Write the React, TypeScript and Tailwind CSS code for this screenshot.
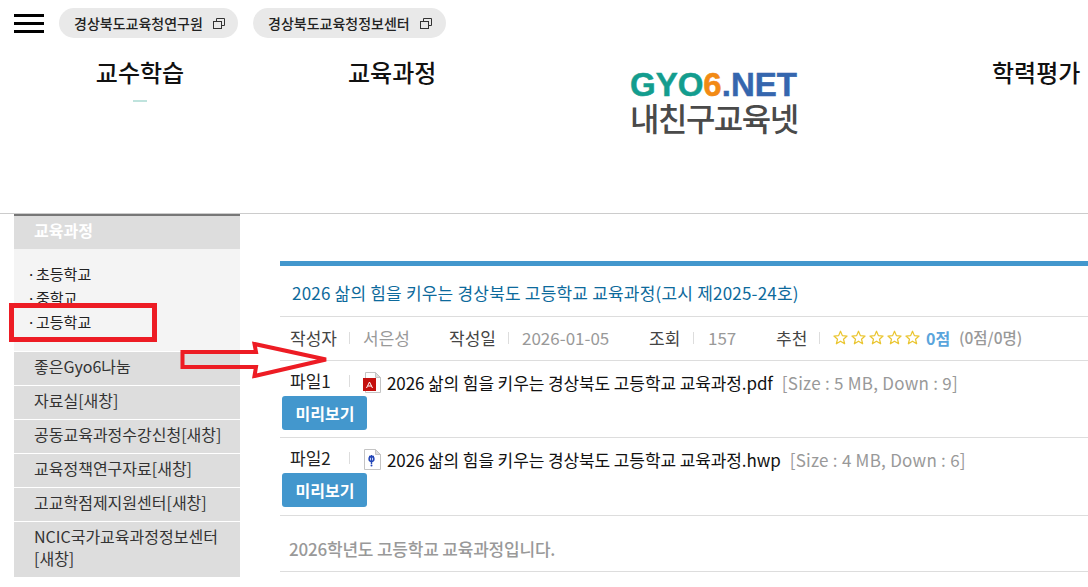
const menu = ["좋은Gyo6나눔", "자료실[새창]", "공동교육과정수강신청[새창]", "교육정책연구자료[새창]", "고교학점제지원센터[새창]"];
const grades = ["초등학교", "중학교", "고등학교"];

function PopupIcon() {
  return (
    <svg width="12" height="11" viewBox="0 0 12 11" fill="none" stroke="#333" strokeWidth="1">
      <path d="M3.5 3V.5h8v7H8.5" />
      <rect x=".5" y="3.5" width="8" height="7" />
    </svg>
  );
}

function Star() {
  return (
    <svg width="15" height="15" viewBox="0 0 24 24" fill="none" stroke="#eac52f" strokeWidth="2" strokeLinejoin="round">
      <path d="M12 2l3 7 7.5.7-5.7 5 1.8 7.3L12 18l-6.6 4 1.8-7.3-5.7-5L9 9z" />
    </svg>
  );
}

function FileIcon({ kind }: { kind: "pdf" | "hwp" }) {
  return (
    <svg width="18" height="21" viewBox="0 0 18 21" className="shrink-0">
      <path d={kind === "pdf" ? "M2.5.5h10l5 5v15h-15z" : "M1.5.5h11l5 5v15h-16z"} fill="#fff" stroke="#c4c4c4" />
      <path d="M12.5.5v5h5z" fill="#ddd" stroke="#c4c4c4" />
      {kind === "pdf" ? (
        <>
          <rect x="0" y="6" width="13" height="13" fill="#c4100e" />
          <path d="M3.5 16l3-6 3 6M5 14h3.5" fill="none" stroke="#fff" strokeWidth="1" />
        </>
      ) : (
        <>
          <circle cx="8.5" cy="10" r="2.4" fill="none" stroke="#2346b8" strokeWidth="1.5" />
          <path d="M8.5 6v9M6 7.5h5" stroke="#2346b8" strokeWidth="1.4" />
          <circle cx="8.5" cy="16.5" r="1" fill="#2346b8" />
        </>
      )}
    </svg>
  );
}

function Divider() {
  return <span className="h-3 w-px shrink-0 bg-[#ddd]" />;
}

function FileRow({ label, kind, name, size, down, height }: { label: string; kind: "pdf" | "hwp"; name: string; size: string; down: string; height: string }) {
  return (
    <div className={`border-b border-[#ddd] ${height}`}>
      <div className="flex h-[35px] items-center pt-[8px] pl-[10px] whitespace-nowrap">
        <span className="-mt-[3px] w-[59px] text-[17px] text-[#222]">{label}</span>
        <span className="-mt-[3px] flex"><Divider /></span>
        <span className="ml-[13px] flex"><FileIcon kind={kind} /></span>
        <span className="ml-[6px] text-[17px] tracking-[-0.1px] text-[#111]">{name}</span>
        <span className="ml-[9px] text-[17px] tracking-[0.25px] text-[#999]">[Size : {size} MB, Down : {down}]</span>
      </div>
      <button className="ml-[2px] flex h-[34px] w-[85px] items-center justify-center rounded-[3px] bg-[#4397cd] pl-[1px] text-[16px] font-bold text-white">
        미리보기
      </button>
    </div>
  );
}

export default function App() {
  return (
    <div className="relative h-[587px] w-[1088px] overflow-hidden bg-white font-['Noto_Sans_CJK_KR','Noto_Sans',sans-serif]">
      <header className="h-[214px] border-b border-[#ccc]">
        <div className="flex items-center pt-2 pl-[14px]">
          <div className="flex w-[30px] flex-col gap-[5px]">
            <span className="h-[3px] bg-black" />
            <span className="h-[3px] bg-black" />
            <span className="h-[3px] bg-black" />
          </div>
          <a className="ml-[15px] flex h-[30px] w-[179px] items-center gap-[10px] rounded-full bg-[#e9e9e9] pl-[15px] text-[14px] font-medium whitespace-nowrap text-[#222]">
            경상북도교육청연구원 <PopupIcon />
          </a>
          <a className="ml-[15px] flex h-[30px] w-[193px] items-center gap-[10px] rounded-full bg-[#e9e9e9] pl-[15px] text-[14px] font-medium whitespace-nowrap text-[#222]">
            경상북도교육청정보센터 <PopupIcon />
          </a>
        </div>
        <nav className="flex items-start pt-[18px] pl-[96px] text-[24px] leading-[32px] font-medium text-[#111]">
          <div className="flex w-[88px] flex-col items-center">
            <span className="whitespace-nowrap">교수학습</span>
            <span className="mt-[12px] h-[2px] w-[14px] bg-[#bfe3dd]" />
          </div>
          <span className="ml-[164px] w-[88px] whitespace-nowrap">교육과정</span>
          <div className="ml-[194px] flex w-[170px] flex-col items-start pt-[13px]">
            <div className="font-['Liberation_Sans',sans-serif] text-[33px] leading-[32px] font-bold whitespace-nowrap [-webkit-text-stroke:0.5px]">
              <span className="text-[#139d8e]">GYO</span>
              <span className="text-[#f28a14]">6</span>
              <span className="text-[#3566ae]">.NET</span>
            </div>
            <div className="-mt-px text-[32px] leading-[34px] font-medium tracking-[-1.5px] whitespace-nowrap text-[#4a4a4a]">내친구교육넷</div>
          </div>
          <span className="ml-[192px] w-[88px] whitespace-nowrap">학력평가</span>
        </nav>
      </header>

      <div className="flex items-start">
        <aside className="ml-[14px] w-[226px] text-[16px] text-[#333]">
          <h2 className="flex h-[35px] items-center border-t-2 border-[#777] bg-[#ddd] pb-[6px] pl-[20px] font-bold text-white">교육과정</h2>
          <ul className="h-[102px] bg-[#f4f4f4] pt-[13px] pl-[13px] text-[15px] text-[#222]">
            {grades.map((g) => (
              <li key={g} className="flex h-[24px] leading-[24px]">
                <span className="w-[9px]">·</span>
                {g}
              </li>
            ))}
          </ul>
          {menu.map((item) => (
            <div key={item} className="mt-[1px] flex h-[33px] items-center bg-[#ddd] pb-[5px] pl-[20px]">{item}</div>
          ))}
          <div className="mt-[1px] h-[55px] bg-[#ddd] pt-[3px] pl-[20px] leading-[22px]">
            NCIC국가교육과정정보센터
            <br />
            [새창]
          </div>
        </aside>

        <main className="ml-[40px] flex-1 pt-[47px]">
          <div className="h-[5px] bg-[#4397cd]" />
          <h1 className="flex h-[51px] items-center border-b border-[#ddd] pt-[3px] pl-[12px] text-[17px] font-normal tracking-[0.2px] whitespace-nowrap text-[#0d6a9c]">
            2026 삶의 힘을 키우는 경상북도 고등학교 교육과정(고시 제2025-24호)
          </h1>
          <div className="flex h-[44px] items-center border-b border-[#ddd] pb-[2px] pl-[10px] text-[17px] whitespace-nowrap text-[#999]">
            <span className="w-[48px] text-[#444]">작성자</span>
            <span className="ml-[11px] flex"><Divider /></span>
            <span className="ml-[13px] w-[46px]">서은성</span>
            <span className="ml-[40px] w-[48px] text-[#444]">작성일</span>
            <span className="ml-[11px] flex"><Divider /></span>
            <span className="ml-[13px] w-[87px]">2026-01-05</span>
            <span className="ml-[40px] w-[32px] text-[#444]">조회</span>
            <span className="ml-[12px] flex"><Divider /></span>
            <span className="ml-[14px] w-[28px]">157</span>
            <span className="ml-[40px] w-[32px] text-[#444]">추천</span>
            <span className="ml-[11px] flex"><Divider /></span>
            <span className="ml-[13px] flex gap-[3px]"><Star /><Star /><Star /><Star /><Star /></span>
            <span className="ml-[6px] w-[23px] text-[16px] font-bold text-[#5aa5dc]">0점</span>
            <span className="ml-[10px] text-[15.5px] font-medium">(0점/0명)</span>
          </div>
          <FileRow label="파일1" kind="pdf" name="2026 삶의 힘을 키우는 경상북도 고등학교 교육과정.pdf" size="5" down="9" height="h-[77px]" />
          <FileRow label="파일2" kind="hwp" name="2026 삶의 힘을 키우는 경상북도 고등학교 교육과정.hwp" size="4" down="6" height="h-[78px]" />
          <p className="flex h-[56px] items-center border-b border-[#ddd] pt-[10px] pl-[9px] text-[17px] font-medium tracking-[-0.2px] text-[#999]">
            2026학년도 고등학교 교육과정입니다.
          </p>
        </main>
      </div>

      <div className="absolute top-[303px] left-[9px] h-[39px] w-[148px] border-[5px] border-[#ed1c24]" />
      <svg className="absolute top-[340px] left-[178px]" width="155" height="40" viewBox="0 0 155 40" fill="none" stroke="#ed1c24" strokeWidth="4" strokeLinejoin="miter">
        <path d="M4.5 12H78L76.5 4 148 19.5 76.5 36 78 27H4.5z" />
      </svg>
    </div>
  );
}
